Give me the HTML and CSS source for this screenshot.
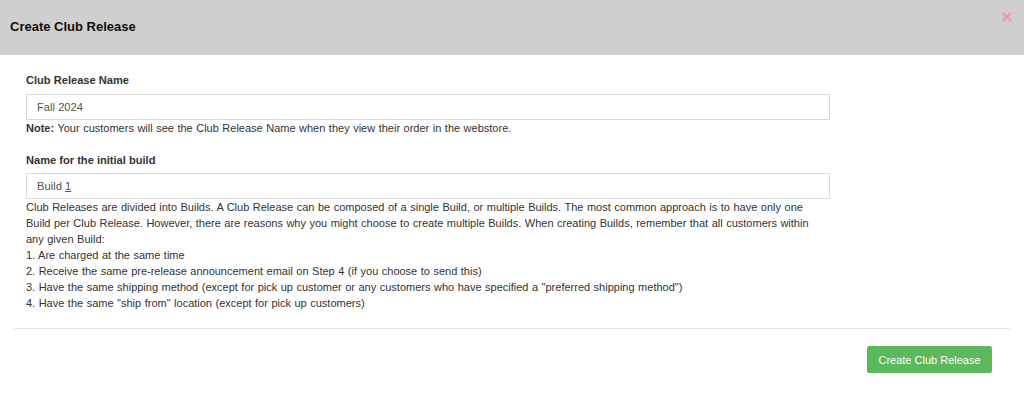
FILE: index.html
```html
<!DOCTYPE html>
<html>
<head>
<meta charset="utf-8">
<link rel="stylesheet" href="styles.css">
</head>
<body>
<div class="modal">
  <div class="modal-header">
    <h4 class="modal-title">Create Club Release</h4>
    <span class="close"><svg width="10" height="10" viewBox="0 0 10 10"><path d="M1 1L9 9M9 1L1 9" stroke="#e9a1a1" stroke-width="2.6" stroke-linecap="butt"/></svg></span>
  </div>
  <div class="modal-body">
    <div class="form-col">
      <label class="label">Club Release Name</label>
      <div class="input">Fall 2024</div>
      <div class="text"><b>Note:</b> Your customers will see the Club Release Name when they view their order in the webstore.</div>
      <label class="label label-second">Name for the initial build</label>
      <div class="input">Build <span class="ul">1</span></div>
      <div class="text help">Club Releases are divided into Builds. A Club Release can be composed of a single Build, or multiple Builds. The most common approach is to have only one Build per Club Release. However, there are reasons why you might choose to create multiple Builds. When creating Builds, remember that all customers within any given Build:<br>1. Are charged at the same time<br>2. Receive the same pre-release announcement email on Step 4 (if you choose to send this)<br>3. Have the same shipping method (except for pick up customer or any customers who have specified a "preferred shipping method")<br>4. Have the same "ship from" location (except for pick up customers)</div>
    </div>
  </div>
  <div class="modal-footer">
    <button class="btn">Create Club Release</button>
  </div>
</div>
</body>
</html>
```

FILE: styles.css
```css
html, body {
  margin: 0;
  padding: 0;
  background: #fff;
  font-family: "Liberation Sans", Arial, sans-serif;
  font-size: 11px;
  color: #333;
}
.modal {
  width: 1024px;
}
.modal-header {
  background: #cfcfcf;
  height: 55px;
  display: flex;
  align-items: center;
  justify-content: space-between;
  padding: 0 12px 0 10px;
  box-sizing: border-box;
}
.modal-title {
  margin: 0;
  font-size: 13px;
  font-weight: bold;
  color: #111;
  padding-bottom: 3px;
}
.close {
  align-self: flex-start;
  margin-top: 12px;
  line-height: 0;
}
.modal-body {
  padding: 17px 14px 0 26px;
}
.form-col {
  width: 804px;
}
.label {
  display: block;
  font-weight: bold;
  line-height: 16px;
  margin-bottom: 6px;
  color: #333;
  font-size: 11.1px;
}
.label-second {
  margin-top: 16px;
  margin-bottom: 5px;
}
.input {
  height: 26px;
  box-sizing: border-box;
  border: 1px solid #d9d9d9;
  padding: 0 10px;
  line-height: 24px;
  color: #555;
  font-size: 11.2px;
}
.ul {
  text-decoration: underline;
  text-decoration-color: #3a4fd0;
}
.text {
  line-height: 16px;
  color: #333;
  font-size: 11px;
  word-spacing: 0.45px;
}
.help {
  padding-right: 14px;
}
.modal-footer {
  margin: 17px 14px 0 14px;
  border-top: 1px solid #e5e5e5;
  padding: 17px 18px 0 0;
  display: flex;
  justify-content: flex-end;
}
.btn {
  background: #5cb85c;
  border: 1px solid #5cb85c;
  color: #fff;
  font-family: "Liberation Sans", Arial, sans-serif;
  font-size: 11px;
  height: 27px;
  width: 125px;
  padding: 0;
  border-radius: 2px;
}
```
